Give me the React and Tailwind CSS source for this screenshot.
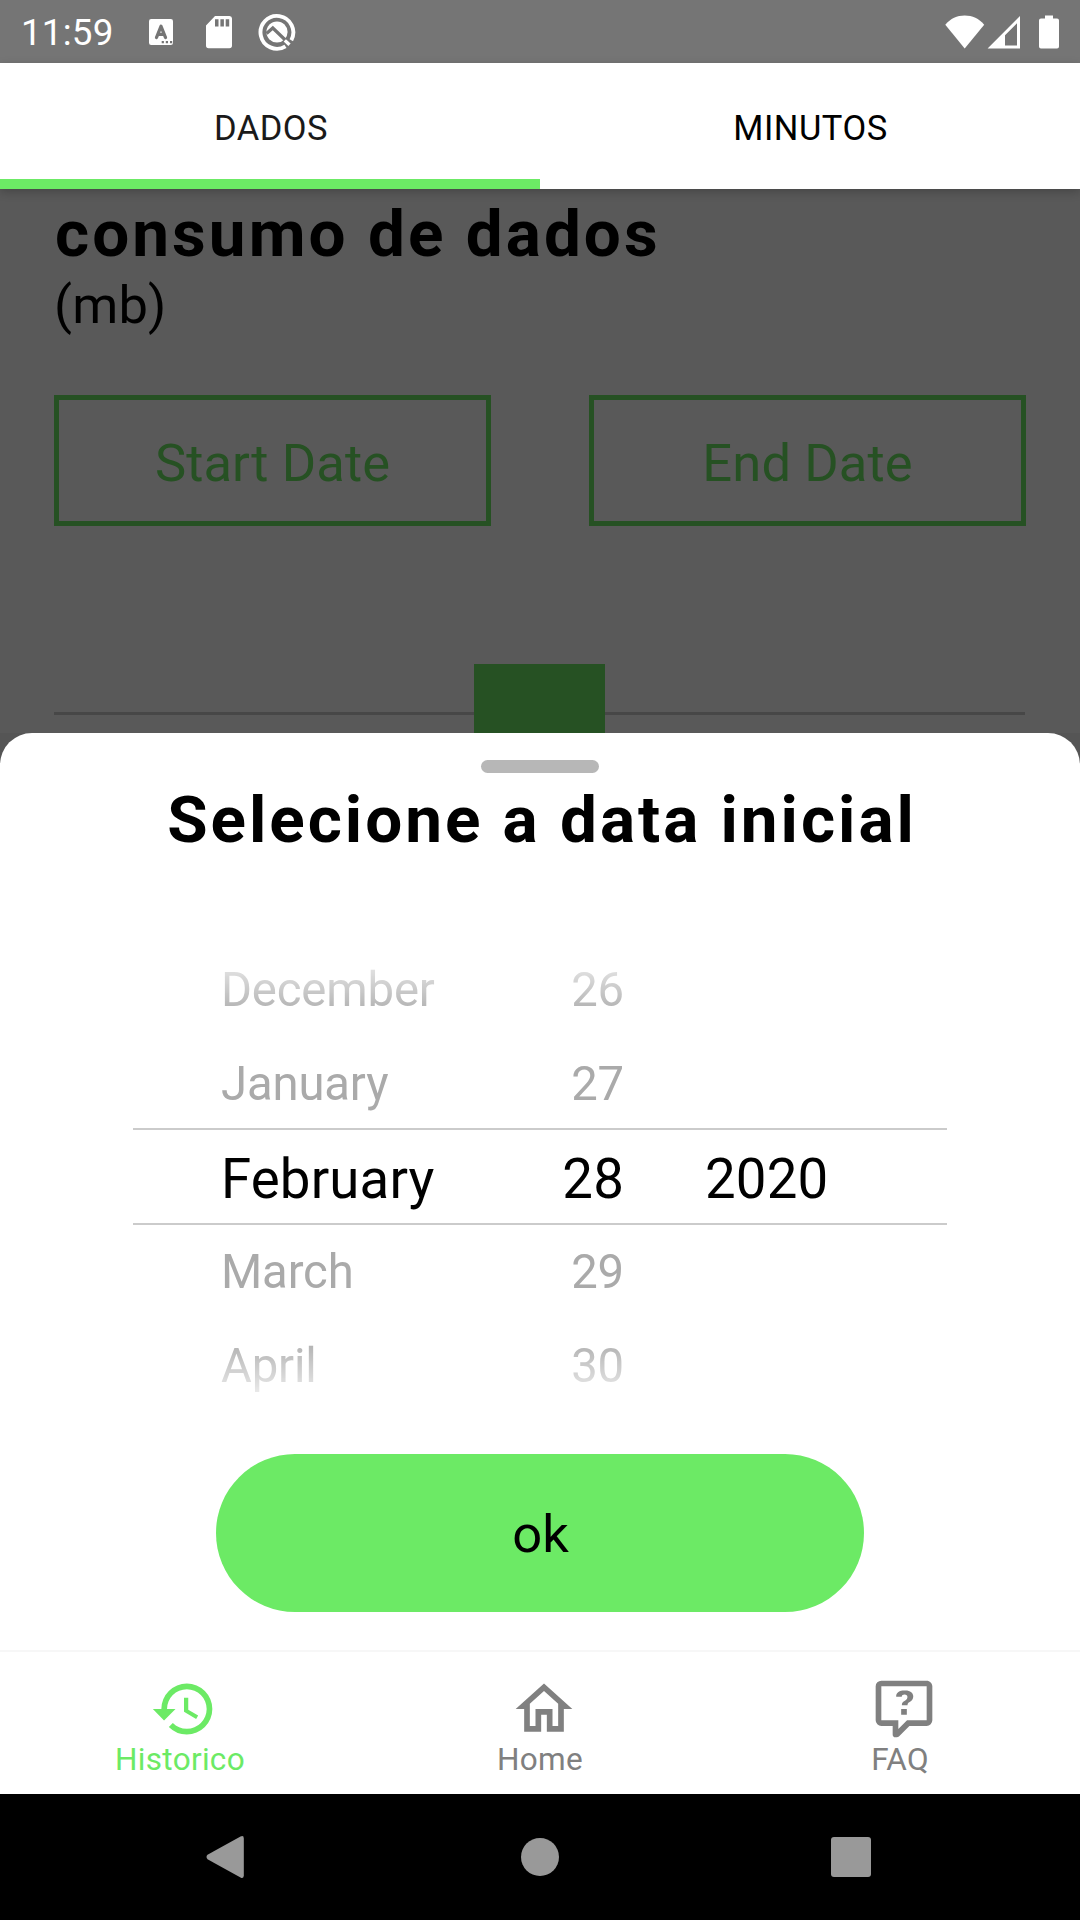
import React from "react";

function StatusBar() {
  return (
    <div className="flex h-[63px] shrink-0 items-center bg-[#757575] text-white">
      <span className="ml-[21px] w-[93px] pt-[3px] text-[36.75px] leading-[60px] tracking-[0.200px] whitespace-nowrap">11:59</span>
      <svg className="ml-[35px] h-[28px] w-[24px]" viewBox="0 0 24 28">
        <rect y="1" width="24" height="26" rx="2.2" fill="#fff" />
        <path d="M7.500 19.500L12 8.300l4.500 11.200M8.800 16.300h6.400" fill="none" stroke="#757575" strokeWidth="3.300" strokeLinecap="round" strokeLinejoin="round" />
        <path d="M12.7 23h2.2v2.2h-2.2zM16.8 23H19v2.2h-2.2zM21 23h2.2v2.2H21z" fill="#757575" />
      </svg>
      <svg className="ml-[32px] h-[34px] w-[28px]" viewBox="0 0 28 34">
        <path d="M10 1h14.500A2.600 2.600 0 0 1 27 3.600v27a2.600 2.600 0 0 1-2.600 2.600H3.600A2.600 2.600 0 0 1 1 30.600V10.500z" fill="#fff" />
        <path d="M10 4.200h3.500v7.300H10zM15.400 4.200h3.500v7.300h-3.500zM20.700 4.200h3.500v7.300h-3.500z" fill="#757575" />
      </svg>
      <svg className="ml-[25px] h-[38px] w-[38px]" viewBox="0 0 38 38">
        <path d="M27.500 33.300A16.400 16.400 0 1 1 33.300 27.200" fill="none" stroke="#fff" strokeWidth="3.900" />
        <circle cx="19" cy="19" r="10.600" fill="#fff" />
        <path d="M8.500 20.500L14.800 15L32 31.500" fill="none" stroke="#757575" strokeWidth="3.200" />
        <path d="M26.800 27.400L31.500 31.800" stroke="#fff" strokeWidth="3.300" />
      </svg>
      <div className="flex-1" />
      <svg className="h-[34px] w-[40px]" viewBox="0 0 40 34">
        <path d="M.3 9.800C5.500 3.600 12 .6 19.700.6S34 3.600 39.200 9.800L19.700 33.400z" fill="#fff" />
      </svg>
      <svg className="ml-[2px] h-[34px] w-[34px]" viewBox="0 0 34 34">
        <path fillRule="evenodd" d="M.6 33.500L33 1v32.500zM18 20.200v10.300h12V8.200z" fill="#fff" />
      </svg>
      <svg className="mr-[21px] ml-[18px] h-[34px] w-[20px]" viewBox="0 0 20 34">
        <path d="M6 .4h8v3h4a2 2 0 0 1 2 2V31.500a2 2 0 0 1-2 2H2a2 2 0 0 1-2-2V5.400a2 2 0 0 1 2-2h4z" fill="#fff" />
      </svg>
    </div>
  );
}

function Tabs() {
  return (
    <div className="relative z-10 flex h-[126px] shrink-0 bg-white text-[34.500px] leading-[40px] tracking-[0.500px] shadow-[0_3px_9px_rgba(0,0,0,0.22)]">
      <div className="flex flex-1 flex-col items-center justify-between text-[#1a1a1a]">
        <span className="pt-[45px] pl-[2px]">DADOS</span>
        <div className="h-[10px] w-full bg-[#6cea65]" />
      </div>
      <div className="flex flex-1 flex-col items-center text-black">
        <span className="pt-[45px] pl-px">MINUTOS</span>
      </div>
    </div>
  );
}

function DateBox({ label }) {
  return (
    <div className="flex h-[131px] w-[437px] items-center justify-center border-[5px] border-[#265123] pt-[4px] text-[52.500px] leading-[60px] tracking-[0.100px] text-[#265123]">
      {label}
    </div>
  );
}

function Consumption() {
  return (
    <div className="flex h-[544px] shrink-0 flex-col bg-[#595959] px-[54px] text-black">
      <h1 className="pt-[5px] pl-px text-[65.600px] leading-[80px] font-bold tracking-[3.050px] whitespace-nowrap">consumo de dados</h1>
      <div className="text-[52.500px] leading-[62px] tracking-[0.200px]">(mb)</div>
      <div className="mt-[59px] flex justify-between">
        <DateBox label="Start Date" />
        <DateBox label="End Date" />
      </div>
      <div className="mt-[138px] flex h-[69px]">
        <div className="mt-[48px] h-[3px] w-[420px] bg-[#474747]" />
        <div className="h-full w-[131px] bg-[#265123]" />
        <div className="mt-[48px] h-[3px] w-[420px] bg-[#474747]" />
      </div>
    </div>
  );
}

const months = ["December", "January", "February", "March", "April"];
const days = ["26", "27", "28", "29", "30"];
const years = ["", "", "2020", "", ""];

function Wheel({ items, className }) {
  return (
    <div className={className}>
      {items.map((item, i) =>
        i === 2 ? (
          <div key={i} className="h-[94px] pt-[2px] text-[54.600px] leading-[94px] tracking-[0.150px] text-black">{item}</div>
        ) : (
          <div key={i} className="h-[94px] pt-px text-[47.250px] leading-[94px] tracking-[-0.150px] text-[#aaaaaa]">{item}</div>
        )
      )}
    </div>
  );
}

function DatePicker() {
  return (
    <div className="relative mx-auto mt-[74px] w-[814px]">
      <div className="flex h-[470px] pl-[88px] [mask-image:linear-gradient(to_bottom,transparent_0px,black_76px,black_394px,transparent_470px)]">
        <Wheel items={months} className="w-[240px]" />
        <Wheel items={days} className="w-[163px] text-right" />
        <Wheel items={years} className="ml-[81px] w-[140px]" />
      </div>
      <div className="pointer-events-none absolute inset-x-0 top-[186px] h-[97px] border-y-2 border-[#cbcbcb]" />
    </div>
  );
}

function Sheet() {
  return (
    <div className="bg-[#555555]">
      <div className="flex h-[917px] flex-col items-center rounded-t-[32px] bg-white pt-[27px] text-black">
        <div className="h-[13px] w-[118px] rounded-full bg-[#b7b7b7]" />
        <h2 className="mt-[7px] pl-[4px] text-[65.600px] leading-[80px] font-bold tracking-[2.980px] whitespace-nowrap">Selecione a data inicial</h2>
        <div className="mt-[8px]">
          <DatePicker />
        </div>
        <button className="mt-[42px] flex h-[158px] w-[648px] items-center justify-center rounded-full bg-[#6cea65] pt-[2px] pl-px text-[52.500px] leading-[60px]">
          ok
        </button>
      </div>
    </div>
  );
}

const navItems = [
  {
    label: "Historico",
    color: "text-[#6cea65]",
    path: "M13.500 8H12v5l4.280 2.540.720-1.210-3.500-2.080V8M13 3a9 9 0 0 0-9 9H1l3.960 4.030L9 12H6a7 7 0 0 1 7-7 7 7 0 0 1 7 7 7 7 0 0 1-7 7c-1.930 0-3.680-.790-4.940-2.060l-1.420 1.420A8.896 8.896 0 0 0 13 21a9 9 0 0 0 9-9 9 9 0 0 0-9-9",
  },
  {
    label: "Home",
    color: "text-[#808080]",
    path: "M12 5.690l5 4.500V18h-2v-6H9v6H7v-7.810l5-4.500M12 3L2 12h3v8h6v-6h2v6h6v-8h3",
  },
  {
    label: "FAQ",
    color: "text-[#808080]",
    path: "M4 2a2 2 0 0 0-2 2v12a2 2 0 0 0 2 2h4v3a1 1 0 0 0 1 1h.500c.250 0 .500-.100.710-.290L13.900 18H20a2 2 0 0 0 2-2V4c0-1.110-.900-2-2-2H4m0 2h16v12h-6.920L10 19.080V16H4V4m8.190 1.500c-.890 0-1.630.170-2.170.520-.560.370-.840.980-.780 1.690h1.970c0-.270.100-.490.270-.610.200-.140.440-.200.710-.200.310 0 .570.080.750.240.180.160.270.420.270.660 0 .240-.070.470-.200.670-.150.220-.330.390-.560.520-.460.280-.780.530-.950.740-.170.200-.260.510-.260.940h2c0-.240.050-.480.130-.630.080-.150.250-.290.480-.430.400-.180.740-.450 1.020-.780.260-.360.400-.750.400-1.200 0-.640-.240-1.200-.740-1.560-.470-.380-1.140-.570-1.990-.570M11 12v2h2v-2h-2z",
  },
];

function BottomNav() {
  return (
    <div className="flex h-[144px] shrink-0 border-t-2 border-[#f7f7f7] bg-white">
      {navItems.map((item) => (
        <div key={item.label} className={`flex flex-1 flex-col items-center pt-[23px] ${item.color}`}>
          <svg className="ml-[7px] h-[68px] w-[68px]" viewBox="0 0 24 24" fill="currentColor">
            <path d={item.path} />
          </svg>
          <span className="-mt-[3px] text-[31.500px] leading-[40px] tracking-[0.300px]">{item.label}</span>
        </div>
      ))}
    </div>
  );
}

function SystemNav() {
  return (
    <div className="flex h-[126px] shrink-0 items-center bg-black">
      <svg className="ml-[206px] h-[44px] w-[39px]" viewBox="0 0 39 44">
        <path d="M1.500 19.800L34.500 1.600Q37.800 0 37.800 3.500V40.500Q37.800 44 34.500 42.400L1.500 24.200Q-.5 22 1.500 19.800z" fill="#999" />
      </svg>
      <div className="ml-[276px] h-[38px] w-[38px] rounded-full bg-[#999999]" />
      <div className="ml-[272px] h-[40px] w-[40px] rounded-[3px] bg-[#999999]" />
    </div>
  );
}

export default function App() {
  return (
    <div className="flex h-[1920px] w-[1080px] flex-col overflow-hidden bg-white font-['Roboto',sans-serif]">
      <StatusBar />
      <Tabs />
      <Consumption />
      <Sheet />
      <BottomNav />
      <SystemNav />
    </div>
  );
}
